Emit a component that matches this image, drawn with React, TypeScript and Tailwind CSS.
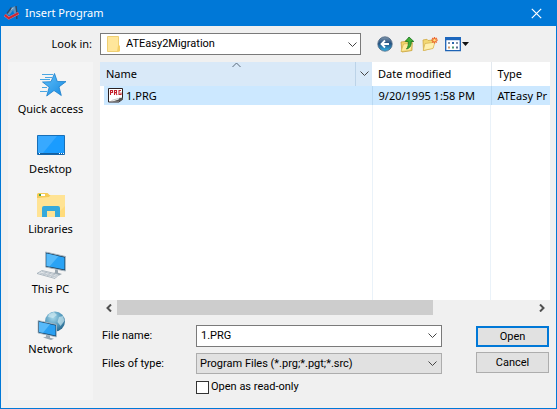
import React from "react";

const CloseIcon = () => (
  <svg width="11" height="11" viewBox="0 0 11 11" fill="none" stroke="#fff" strokeWidth="1.2">
    <path d="M.8.8l9.4 9.4M10.2.8L.8 10.2" />
  </svg>
);

const AppLogo = () => (
  <svg width="16" height="16" viewBox="0 0 16 16" fill="none">
    <path d="M2.500 9L7.500 2.500 11.500 1l.8 6.500-2.300 1-.8-3.500L5.500 10z" fill="#5f93bd" />
    <path d="M7.500 2.500L3 8.500M12 1l.8 6.500M12.800 10v4" stroke="#34465f" strokeWidth="1.400" />
    <path d="M7 4.500L9.500 3" stroke="#a9cbe4" />
    <path d="M.8 10l4 3.200 9.700-5" stroke="#dd8f98" strokeWidth="2.800" />
    <path d="M.8 10l4 3.200 9.700-5" stroke="#cf2531" strokeWidth="2" />
  </svg>
);

const ChevronDown = ({ className = "" }: { className?: string }) => (
  <svg className={className} width="9" height="6" viewBox="0 0 9 6" fill="none" stroke="#444">
    <path d="M.5.5l4 4 4-4" />
  </svg>
);

const FolderIcon = () => (
  <svg width="14" height="16" viewBox="0 0 14 16">
    <path d="M.5.500h11V15.500H.5z" fill="#ffe69b" stroke="#efcf73" />
    <path d="M11 9.500h2v6h-3z" fill="#f5cf68" />
  </svg>
);

const PrgIcon = () => (
  <svg width="16" height="16" viewBox="0 0 16 16" fill="none">
    <path d="M.5.500h14v10.500l-3.500 3H.5z" fill="#fff" stroke="#2b2020" />
    <path d="M15 9.500l-3.500.5-1 1.500-6 2h7.500l3-2z" fill="#555" />
    <path d="M3.500 12.500l7-2 1-1" stroke="#c4c4c4" />
    <path d="M2.500 7V2.500h2v2h-2M6.500 7V2.500h2v2h-2M8 5l1 2M13 2.500h-2v4h2v-2" stroke="#c4202a" strokeWidth="1.100" />
  </svg>
);

const BackIcon = () => (
  <svg width="16" height="16" viewBox="0 0 16 16" fill="none">
    <defs>
      <linearGradient id="back" x1="0" y1="0" x2="0" y2="1">
        <stop offset="0" stopColor="#8498ad" />
        <stop offset=".45" stopColor="#24507f" />
        <stop offset="1" stopColor="#35b5e8" />
      </linearGradient>
    </defs>
    <circle cx="8" cy="8" r="7.200" fill="url(#back)" stroke="#49637f" strokeWidth=".8" />
    <path d="M12 8H5M8 4.500L4.500 8 8 11.500" stroke="#fff" strokeWidth="1.800" />
  </svg>
);

const UpFolderIcon = () => (
  <svg width="15" height="17" viewBox="0 0 15 17">
    <path d="M1 6l4-.5 1-1.500 6 1v9.500l-10 1.500z" fill="#f3d56b" stroke="#c8a23c" strokeWidth=".8" />
    <path d="M1 15.500L3.500 8l9-1-1.500 7.500z" fill="#ffeb9c" stroke="#d3b04b" strokeWidth=".7" />
    <path d="M9 1l4.800 4.500h-2.600c.2 4-1 6.500-4.700 7.500 1.700-2 2-4.500 1.700-7.500H5.300z" fill="#3fae36" stroke="#17731d" strokeWidth=".8" />
  </svg>
);

const NewFolderIcon = () => (
  <svg width="16" height="16" viewBox="0 0 16 16" fill="none">
    <path d="M1 4l4-.7 1 1.200 5-.5v8L1.500 14.500z" fill="#f3d873" stroke="#cfa844" strokeWidth=".8" />
    <path d="M1.200 14.500L3 7.500l10-1.300L11 12.500z" fill="#fff0ae" stroke="#d8b655" strokeWidth=".8" />
    <path d="M12.500 1v6.500M9.300 4.200h6.500M10.200 2l4.600 4.500M14.800 2l-4.600 4.500" stroke="#ee6a2e" strokeWidth="1.300" />
    <circle cx="12.500" cy="4.200" r="1.200" fill="#ffe37a" />
  </svg>
);

const ViewIcon = () => (
  <svg width="24" height="15" viewBox="0 0 24 15">
    <path d="M.7.700h14.600v13H.7z" fill="#fff" stroke="#1d63b5" strokeWidth="1.300" />
    <path d="M0 0h16v3.200H0z" fill="#1d67bd" />
    <path d="M3 5h2v2H3zM11 5h2v2h-2z" fill="#8495a9" />
    <path d="M7 5h2v2H7z" fill="#2c68ab" />
    <path d="M3 9.500h2v2H3z" fill="#d49a68" />
    <path d="M7 9.500h2v2H7z" fill="#4f9a70" />
    <path d="M11 9.500h2v2h-2z" fill="#596f93" />
    <path d="M17 5h7l-3.500 4z" fill="#111" />
  </svg>
);

const QuickAccessIcon = () => (
  <svg width="32" height="32" viewBox="0 0 32 32" fill="none">
    <defs>
      <linearGradient id="star" x1="0" y1="0" x2="1" y2="1">
        <stop offset="0" stopColor="#62c2fb" />
        <stop offset="1" stopColor="#1688e0" />
      </linearGradient>
    </defs>
    <path
      d="M19.500 4.500l2.800 8 8.700.1-7 5.300 2.300 8.600-7.300-5-7.300 5.500 2.500-8.800-6.700-5.200 8.500-.3z"
      fill="url(#star)"
      stroke="#1a7fcc"
      strokeWidth=".8"
    />
    <path d="M7 5.500h11M10 8.500h7M5 10.500h10M7 18.500h5M5 22.500h7" stroke="#4aa6e2" />
  </svg>
);

const DesktopIcon = () => (
  <svg width="32" height="32" viewBox="0 0 32 32">
    <path d="M2.500 6.500h27v19h-27z" fill="#1a9cff" stroke="#176fb8" />
    <path d="M3 7h19L8 24H3z" fill="#38a9ff" />
    <path d="M3 24h26v1.500H3z" fill="#145f9f" />
    <path d="M4 24h1v1H4zM24 24h1v1h-1zM26 24h1v1h-1zM28 24h1v1h-1z" fill="#fff" />
  </svg>
);

const LibrariesIcon = () => (
  <svg width="32" height="32" viewBox="0 0 32 32">
    <path d="M2 5.500Q2 4 3.500 4h9l2 2H30v22H2z" fill="#f5cb57" />
    <path d="M2 9l12-1 1.500-2H30v22H2z" fill="#ffe394" />
    <path d="M4 5h6v2H4z" fill="#fff" />
    <path d="M4 5h2v2H4z" fill="#47a447" />
    <path d="M7 28v-9q0-2 2-2h14q2 0 2 2v9h-5v-6h-8v6z" fill="#35a9dc" />
    <path d="M25 22l5-5v11h-5z" fill="#ffdb7b" />
  </svg>
);

const ThisPcIcon = () => (
  <svg width="32" height="32" viewBox="0 0 32 32">
    <path d="M10.500 3l20 4.500v14.500l-20-4z" fill="#1d3c55" stroke="#a7b5c0" />
    <path d="M11.500 4.500l18 4v12l-18-3.500z" fill="#2aa3f5" />
    <path d="M11.500 4.500l12 2.700-9 10.400-3-.6z" fill="#56bafa" />
    <path d="M20 20.500l3 .7v2.500l4 1.300-3 1.500-7-2 3-1z" fill="#9ba7b0" />
    <path d="M2 24.500l5-3 17 4-4 4z" fill="#e6eaed" stroke="#9eabb5" strokeWidth=".8" />
    <path d="M5 24l16 4M7 22.500l15 4M8 26l4-3M12 27l4-3M16 28l4-3" fill="none" stroke="#b3bdc5" strokeWidth=".8" />
  </svg>
);

const NetworkIcon = () => (
  <svg width="32" height="32" viewBox="0 0 32 32">
    <defs>
      <radialGradient id="globe" cx=".4" cy=".3" r=".8">
        <stop offset="0" stopColor="#a8d8ea" />
        <stop offset=".6" stopColor="#4b93b8" />
        <stop offset="1" stopColor="#1d587c" />
      </radialGradient>
    </defs>
    <circle cx="20" cy="12.500" r="10" fill="url(#globe)" />
    <path d="M14 5l5-2 3 3-4 3-5-1zM24 8l4-1 1.500 5-4 5-3-4z" fill="#d4edf2" opacity=".65" />
    <path d="M3 11.500l18.500 4v12.500L3 24z" fill="#1d4a6d" stroke="#b5c4ce" strokeWidth=".8" />
    <path d="M4 13l16.500 3.500v10L4 23z" fill="#2aa0f2" />
    <path d="M4 13l11 2.300-7 8.500L4 23z" fill="#58bafa" />
    <path d="M11 26l4 .8v2l4 1-3 1.200-8-2.500 3-.7z" fill="#9ba9b4" />
  </svg>
);

const places = [
  { label: "Quick access", Icon: QuickAccessIcon },
  { label: "Desktop", Icon: DesktopIcon },
  { label: "Libraries", Icon: LibrariesIcon },
  { label: "This PC", Icon: ThisPcIcon },
  { label: "Network", Icon: NetworkIcon },
];

const tools = [
  { label: "Back", Icon: BackIcon },
  { label: "Up one level", Icon: UpFolderIcon },
  { label: "Create new folder", Icon: NewFolderIcon },
  { label: "View menu", Icon: ViewIcon },
];

const TitleBar = () => (
  <header className="flex h-[26px] items-center bg-[#0078d7] pl-[3px] pr-2.5 text-white">
    <AppLogo />
    <h1 className="ml-[5px] flex-1">Insert Program</h1>
    <button type="button" aria-label="Close" className="p-1">
      <CloseIcon />
    </button>
  </header>
);

const LookIn = () => (
  <div className="flex h-9 items-center">
    <label htmlFor="look-in" className="w-[99px] pr-2 text-right">
      Look in:
    </label>
    <div className="relative h-[22px] flex-1">
      <select
        id="look-in"
        className="h-full w-full appearance-none border border-[#7a7a7a] bg-white pl-[25px] font-['Roboto',sans-serif] outline-none"
      >
        <option>ATEasy2Migration</option>
      </select>
      <span className="pointer-events-none absolute left-[7px] top-[3px]">
        <FolderIcon />
      </span>
      <ChevronDown className="pointer-events-none absolute right-1 top-[9px]" />
    </div>
    <div className="flex w-[195px] items-center gap-[7px] pl-4">
      {tools.map(({ label, Icon }) => (
        <button key={label} type="button" aria-label={label}>
          <Icon />
        </button>
      ))}
    </div>
  </div>
);

const PlacesBar = () => (
  <nav className="w-[85px] bg-[#f4f4f4] pt-[7px]">
    {places.map(({ label, Icon }) => (
      <button key={label} type="button" className="flex h-[60px] w-full flex-col items-center leading-4">
        <Icon />
        <span className="whitespace-nowrap">{label}</span>
      </button>
    ))}
  </nav>
);

const FileList = () => (
  <div className="flex min-h-[160px] flex-1 flex-col bg-white">
    <table className="w-full flex-none table-fixed border-collapse text-left">
      <thead>
        <tr className="h-6">
          <th className="relative bg-[#d9e9f8] p-0 font-normal">
            <div className="flex h-6 items-center pl-1.5">
              <span className="flex-1">Name</span>
              <span className="flex h-6 w-[17px] items-center justify-center border-l border-[#bcd3e8]">
                <ChevronDown />
              </span>
            </div>
            <svg className="absolute left-1/2 top-0 -ml-1" width="9" height="6" viewBox="0 0 9 6" fill="none" stroke="#5b6b7a">
              <path d="M.5 5l4-4 4 4" />
            </svg>
          </th>
          <th className="w-[119px] border-r border-[#e3e9ef] p-0 pl-1.5 font-normal">Date modified</th>
          <th className="w-[59px] p-0 pl-1.5 font-normal">Type</th>
        </tr>
      </thead>
      <tbody>
        <tr className="h-[19px]">
          <td className="p-0 pl-1">
            <div className="flex h-[19px] items-center gap-0.5 bg-[#cce8ff] pl-1">
              <PrgIcon />
              1.PRG
            </div>
          </td>
          <td className="whitespace-nowrap border-x border-[#b9d9f3] bg-[#cce8ff] p-0 pl-1.5">9/20/1995 1:58 PM</td>
          <td className="whitespace-nowrap bg-[#cce8ff] p-0 pl-1.5">ATEasy Pr</td>
        </tr>
      </tbody>
    </table>
    <div className="flex flex-1 justify-end">
      <div className="w-[119px] border-x border-[#eaf2f9]" />
      <div className="w-[59px]" />
    </div>
  </div>
);

const ScrollBar = () => (
  <div className="flex h-[15px] items-center">
    <button type="button" aria-label="Scroll left" className="flex w-[17px] justify-center">
      <svg width="6" height="8" viewBox="0 0 6 8" fill="none" stroke="#505050" strokeWidth="2">
        <path d="M5 .5L1.500 4 5 7.500" />
      </svg>
    </button>
    <div className="h-full flex-1">
      <div className="h-full w-[76%] bg-[#cdcdcd]" />
    </div>
    <button type="button" aria-label="Scroll right" className="flex w-[17px] justify-center">
      <svg width="6" height="8" viewBox="0 0 6 8" fill="none" stroke="#505050" strokeWidth="2">
        <path d="M1 .5L4.500 4 1 7.500" />
      </svg>
    </button>
  </div>
);

const FileForm = () => (
  <form
    className="flex pb-1 pl-0.5 pr-px pt-2.5 font-['Roboto',sans-serif]"
    onSubmit={(e) => e.preventDefault()}
  >
    <div className="flex-1">
      <div className="flex h-[22px] items-center">
        <label htmlFor="file-name" className="w-[94px]">
          File name:
        </label>
        <div className="flex h-full flex-1 items-center border border-[#7a7a7a] bg-white pr-1">
          <input id="file-name" type="text" defaultValue="1.PRG" className="w-full min-w-0 flex-1 pl-1 outline-none" />
          <button type="button" aria-label="Recent file names">
            <ChevronDown />
          </button>
        </div>
      </div>
      <div className="mt-1.5 flex h-[21px] items-center">
        <label htmlFor="file-type" className="w-[94px]">
          Files of type:
        </label>
        <div className="relative h-full flex-1">
          <select
            id="file-type"
            className="h-full w-full appearance-none border border-[#adadad] bg-[#e1e1e1] pl-[3px] outline-none"
          >
            <option>Program Files (*.prg;*.pgt;*.src)</option>
          </select>
          <ChevronDown className="pointer-events-none absolute right-[5px] top-2" />
        </div>
      </div>
      <label className="ml-[94px] mt-1 flex w-fit items-center gap-0.5">
        <input type="checkbox" className="size-[13px] appearance-none border border-[#333] bg-white checked:bg-[#0078d7]" />
        Open as read-only
      </label>
    </div>
    <div className="ml-[34px] flex w-[73px] flex-col gap-[5px] pt-px">
      <button type="submit" className="h-[21px] border-2 border-[#0078d7] bg-[#e1e1e1]">
        Open
      </button>
      <button type="button" className="h-[21px] border border-[#adadad] bg-[#e1e1e1]">
        Cancel
      </button>
    </div>
  </form>
);

const App = () => {
  return (
    <div className="flex min-h-screen flex-col border border-t-0 border-[#0078d7] bg-[#f0f0f0] font-['Noto_Sans',sans-serif] text-[11px] leading-[18px] text-black">
      <TitleBar />
      <LookIn />
      <div className="flex flex-1 pb-2 pl-[7px] pr-1.5">
        <PlacesBar />
        <main className="ml-[7px] flex min-w-0 flex-1 flex-col">
          <FileList />
          <ScrollBar />
          <FileForm />
        </main>
      </div>
    </div>
  );
};

export default App;
